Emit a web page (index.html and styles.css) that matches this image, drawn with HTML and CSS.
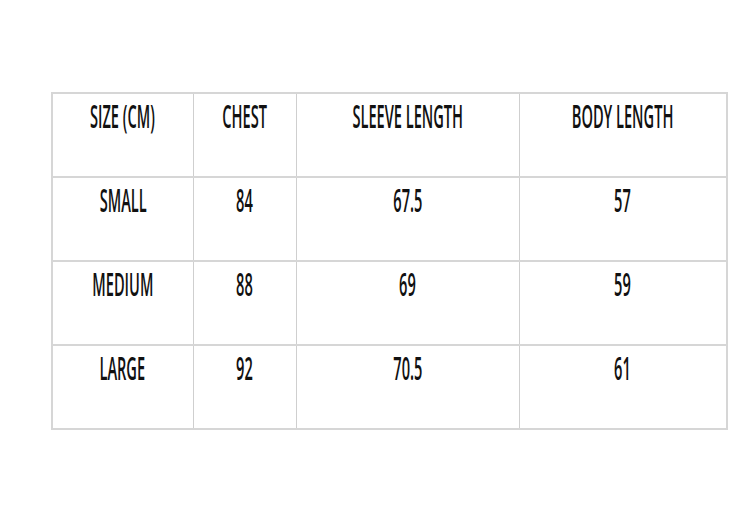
FILE: index.html
```html
<!DOCTYPE html>
<html>
<head>
<meta charset="utf-8">
<link rel="stylesheet" href="styles.css">
</head>
<body>
<table class="size-table">
  <colgroup>
    <col class="c1"><col class="c2"><col class="c3"><col class="c4">
  </colgroup>
  <tr><td><span>SIZE (CM)</span></td><td><span>CHEST</span></td><td><span>SLEEVE LENGTH</span></td><td><span>BODY LENGTH</span></td></tr>
  <tr><td><span>SMALL</span></td><td><span>84</span></td><td><span>67.5</span></td><td><span>57</span></td></tr>
  <tr><td><span>MEDIUM</span></td><td><span>88</span></td><td><span>69</span></td><td><span>59</span></td></tr>
  <tr><td><span>LARGE</span></td><td><span>92</span></td><td><span>70.5</span></td><td><span>61</span></td></tr>
</table>
</body>
</html>
```
FILE: styles.css
```css
html, body {
  margin: 0;
  padding: 0;
  background: #ffffff;
}
body {
  padding: 92px 0 0 51px;
  font-family: "Open Sans", "Liberation Sans", sans-serif;
  color: #111;
}
.size-table {
  border-collapse: collapse;
  width: 675px;
  table-layout: fixed;
  border: 2px solid #d6d6d6;
}
.c1 { width: 141px; }
.c2 { width: 103px; }
.c3 { width: 223px; }
.c4 { width: 208px; }
.size-table td {
  height: 82px;
  padding: 0;
  vertical-align: top;
  text-align: center;
  border-top: 2px solid #d6d6d6;
  border-bottom: 2px solid #d6d6d6;
  border-left: 1px solid #cfcfcf;
  border-right: 1px solid #cfcfcf;
}
.size-table td span {
  display: inline-block;
  margin-top: 6px;
  font-size: 20px;
  font-weight: 600;
  line-height: 20px;
  white-space: nowrap;
  transform: scale(0.73, 1.66);
  transform-origin: 50% 0;
}
```
